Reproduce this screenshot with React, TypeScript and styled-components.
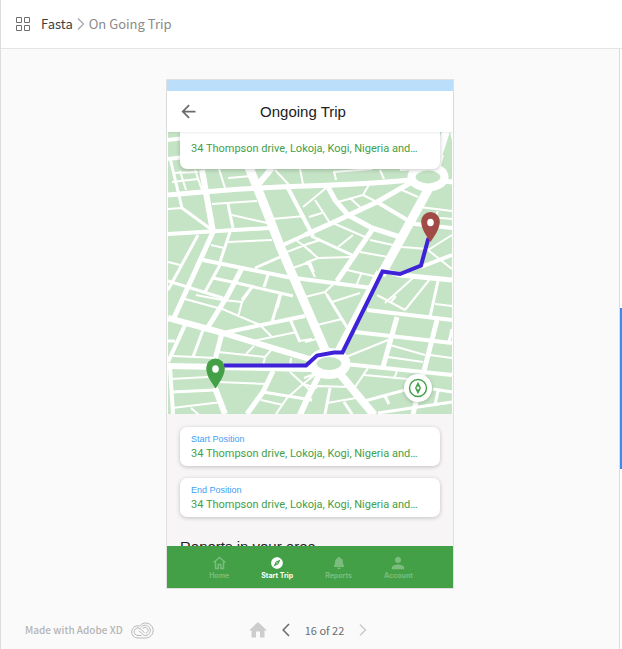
import React from "react";
import styled, { createGlobalStyle } from "styled-components";
import { MdArrowBack, MdExplore, MdPerson } from "react-icons/md";
import { IoNotifications } from "react-icons/io5";

const GlobalStyle = createGlobalStyle`
  *, *::before, *::after { box-sizing: border-box; }
  body { margin: 0; background: #fafafa; }
  button { margin: 0; padding: 0; border: 0; background: none; font: inherit; color: inherit; cursor: pointer; }
  a { color: inherit; text-decoration: none; }
  svg { display: block; flex: none; }
`;

const Page = styled.div`
  min-height: 100vh;
  display: flex;
  flex-direction: column;
  border-left: 1px solid #dcdcdc;
  font-family: "Noto Sans CJK SC", "Noto Sans", sans-serif;
  font-size: 13px;
  line-height: 20px;
`;

const TopBar = styled.header`
  display: flex;
  align-items: center;
  height: 49px;
  padding: 0 14px;
  background: #fff;
  border-bottom: 1px solid #e4e4e4;
`;

const Breadcrumb = styled.nav`
  display: flex;
  align-items: center;
  gap: 4px;
  margin-left: 10px;
`;

const Crumb = styled.a<{ $muted?: boolean }>`
  color: ${(p) => (p.$muted ? "#8a8a8a" : "#3c3c3c")};
`;

const Body = styled.div`
  flex: 1;
  display: flex;
`;

const Stage = styled.div`
  flex: 1;
  min-width: 0;
  display: flex;
  flex-direction: column;
  justify-content: space-between;
`;

const Rail = styled.aside`
  width: 3px;
  display: flex;
  flex-direction: column;
  border-left: 1px solid #dcdcdc;
  background: #fff;
`;

const RailSpace = styled.div<{ $grow: number }>`
  flex: ${(p) => p.$grow} 1 0;
`;

const RailMark = styled.div`
  flex: 161 1 0;
  background: #378ef0;
`;

const Canvas = styled.main`
  display: flex;
  justify-content: center;
  padding-top: 30px;
`;

const Phone = styled.section`
  width: 288px;
  max-width: 100%;
  aspect-ratio: 288 / 510;
  display: flex;
  flex-direction: column;
  border: 1px solid #e0e0e0;
  background: #f7f5f6;
  font-family: "Liberation Sans", Arial, sans-serif;
`;

const StatusBar = styled.div`
  height: 11px;
  background: #bbdefb;
`;

const AppBar = styled.header`
  position: relative;
  z-index: 1;
  display: grid;
  grid-template-columns: 20px 1fr 20px;
  align-items: center;
  height: 41px;
  padding: 0 11px;
  background: #fff;
  box-shadow: 0 1px 2px rgba(0, 0, 0, 0.08);
  color: #6b6b6b;
`;

const Title = styled.h1`
  margin: 0;
  padding-right: 14px;
  text-align: center;
  font-size: 15px;
  font-weight: 400;
  line-height: 20px;
  color: #212121;
`;

const Scroll = styled.div`
  flex: 1;
  min-height: 0;
  overflow: hidden;
`;

const MapArea = styled.div`
  position: relative;
  background: #fff;
`;

const MapDrawing = styled.svg`
  width: 100%;
  height: auto;
`;

const Card = styled.article<{ $floating?: boolean }>`
  background: #fff;
  border-radius: 7px;
  padding: 6px 11px 4px;
  box-shadow: 0 1px 4px rgba(0, 0, 0, 0.22);
  ${(p) =>
    p.$floating &&
    `
    position: absolute;
    top: 0;
    left: 13px;
    right: 13px;
    padding: 9px 11px 12px;
    border-radius: 0 0 7px 7px;
  `}
`;

const CardLabel = styled.div`
  font-size: 9px;
  line-height: 13px;
  color: #42a0f5;
`;

const Address = styled.div`
  overflow: hidden;
  white-space: nowrap;
  text-overflow: ellipsis;
  font-family: Roboto, sans-serif;
  font-size: 11px;
  line-height: 16px;
  color: #43a047;
`;

const Locate = styled.button`
  position: absolute;
  right: 21px;
  bottom: 12px;
  display: grid;
  place-items: center;
  width: 28px;
  height: 28px;
  border-radius: 50%;
  background: #fff;
  box-shadow: 0 1px 4px rgba(0, 0, 0, 0.2);
`;

const Positions = styled.div`
  display: flex;
  flex-direction: column;
  gap: 12px;
  padding: 13px 13px 20px;
`;

const SectionTitle = styled.h2`
  margin: 0;
  padding: 0 13px;
  font-size: 15px;
  font-weight: 400;
  line-height: 20px;
  color: #212121;
`;

const TabBar = styled.nav`
  position: relative;
  display: flex;
  justify-content: center;
  gap: 32px;
  height: 42px;
  padding: 10px 0 0 2px;
  background: #43a047;
`;

const Tab = styled.button<{ $active?: boolean }>`
  display: flex;
  flex-direction: column;
  align-items: center;
  align-self: flex-start;
  gap: 1px;
  color: ${(p) => (p.$active ? "#fff" : "#7abd7d")};
  font-family: Inter, sans-serif;
  font-size: 7px;
  font-weight: 700;
  line-height: 10px;
`;

const Footer = styled.footer`
  display: grid;
  grid-template-columns: 1fr auto 1fr;
  align-items: center;
  height: 38px;
  padding-right: 4px;
`;

const MadeWith = styled.a`
  display: flex;
  align-items: center;
  gap: 8px;
  padding-left: 24px;
  font-size: 10px;
  font-weight: 500;
  color: #b5b5b5;
`;

const Pager = styled.div`
  display: flex;
  align-items: center;
  gap: 15px;
  font-size: 11px;
  color: #6e6e6e;
`;

const ROADS: Record<number, string[]> = {
  2: [
    "M168 209L182 208", "M212 204L257 201", "M232 215L267 223", "M228 242L272 240", "M168 262L180 265",
    "M211 245L224 248", "M287 252L310 243", "M296 240L312 252", "M293 268L310 262L314 272", "M272 219L305 216",
    "M303 207L326 188", "M315 200L330 223", "M309 217L322 213", "M363 195L338 202", "M350 198L361 208",
    "M370 183L363 195L377 202", "M402 190L418 197", "M420 207L452 211", "M438 209L436 219", "M432 217L452 219",
    "M370 240L402 247", "M360 252L388 257", "M333 223L365 237", "M338 247L353 235", "M305 245L320 240",
    "M305 247L318 258L352 257", "M305 263L318 258", "M308 263L315 277", "M347 270L378 277", "M361 274L357 284",
    "M338 280L325 292L305 297", "M325 292L332 303", "M402 247L428 249", "M428 250L452 269", "M428 250L452 235",
    "M413 278L385 303", "M430 279L405 310", "M377 295L405 310", "M396 296L390 303", "M435 304L452 306",
    "M332 302L360 293", "M317 325L342 319", "M305 342L320 338", "M346 357L388 340", "M390 345L425 355",
    "M388 357L423 362", "M430 355L452 358", "M368 368L355 387", "M364 375L408 379", "M397 371L394 379",
    "M315 386L352 387", "M327 403L362 397", "M304 378L317 373", "M303 384L317 388", "M185 299L218 308",
    "M196 295L222 300", "M220 308L260 325L272 337", "M223 300L242 302L238 317", "M242 302L249 292",
    "M248 342L297 332", "M299 341L312 339", "M173 356L217 358", "M218 352L265 357", "M254 346L246 354",
    "M272 349L265 357L263 366", "M291 358L290 367", "M170 379L208 377", "M218 382L265 384", "M172 408L222 402",
    "M191 408L199 415", "M261 400L283 405", "M290 372L312 392", "M276 414L287 398L302 385L318 372",
    "M334 171L336 180", "M333 172L372 169", "M380 170L384 179", "M173 173L198 172", "M172 182L198 179",
    "M195 170L202 190", "M219 169L225 188", "M275 170L290 186", "M300 169L303 184", "M420 169L400 170",
    "M180 171L186 190", "M228 178L252 176", "M443 155L440 166",
  ],
  3: [
    "M170 158L182 208L212 230", "M228 204L233 228", "M198 235L168 290", "M168 281L223 298", "M230 232L220 262",
    "M220 265L205 292", "M213 278L237 283L293 296", "M252 287L242 300", "M268 275L264 287", "M281 293L277 308",
    "M255 268L280 257", "M311 236L352 255", "M438 281L430 317", "M327 295L348 329", "M280 295L272 322",
    "M290 319L300 342", "M203 330L193 357", "M168 341L175 341", "M172 392L215 390", "M263 392L312 400",
    "M330 388L325 414", "M344 402L352 414", "M361 402L405 390", "M433 389L452 392", "M378 413L452 402",
    "M385 396L389 404", "M438 391L435 405", "M452 329L449 342",
  ],
  4: [
    "M168 140L184 138", "M168 159L184 157", "M168 234L270 228", "M203 260L287 277L372 288", "M283 245L305 235",
    "M288 188L313 236", "M377 202L409 221", "M406 223L452 228", "M452 255L421 267", "M223 333L305 316",
    "M185 325L168 362", "M170 367L173 414", "M367 310L452 320", "M355 332L452 343", "M345 364L452 375",
    "M452 132L457 152",
  ],
  5: [
    "M168 195Q240 188 305 186T410 180", "M327 185L335 200L348 215L372 228L400 237", "M305 235L332 223L377 202L412 182",
    "M213 232L183 298L173 320", "M242 268L228 295L208 327", "M372 230L337 281", "M383 270L400 275L452 280",
    "M444 181L453 182", "M437 320L413 414", "M397 317L383 367", "M222 333L215 360", "M273 371L263 392L247 414",
  ],
  6: [
    "M202 170L213 232", "M168 318L223 333L316 361", "M168 366L312 369", "M215 388L225 414", "M320 373L308 397L300 415",
    "M272 168L257 186",
  ],
  8: ["M340 374L374 415", "M446 131L434 168", "M380 272L338 352"],
  9: ["M246 160L267 212L280 246L302 297L326 352", "M429 188L381 275"],
};

const CityMap = () => (
  <MapDrawing viewBox="167 132 286 282" role="img" aria-label="Route map">
    <rect x="168" y="132" width="284" height="282" fill="#c5e4c5" />
    {Object.entries(ROADS).map(([width, lines]) => (
      <path key={width} d={lines.join("")} fill="none" stroke="#fff" strokeWidth={width} strokeLinejoin="round" />
    ))}
    <ellipse cx="428" cy="177" rx="16.5" ry="10.5" fill="#c5e4c5" stroke="#fff" strokeWidth="8" />
    <ellipse cx="329" cy="363.5" rx="17" ry="11" fill="#c5e4c5" stroke="#fff" strokeWidth="9" />
    <path
      d="M224 365.5H306L317 355.5L334 352.5H342.5L382.5 271.5L400 274L421 265.5L428.5 238"
      fill="none"
      stroke="#3d22d8"
      strokeWidth="4"
    />
    <Pin x={215.5} y={388.5} color="#43a047" />
    <Pin x={430.5} y={242} color="#a14a46" />
  </MapDrawing>
);

const Pin = ({ x, y, color }: { x: number; y: number; color: string }) => (
  <g transform={`translate(${x} ${y})`}>
    <path d="M0 0C-5.5 -8 -9.3 -14 -9.3 -20.5A9.3 9.5 0 0 1 9.3 -20.5C9.3 -14 5.5 -8 0 0Z" fill={color} />
    <ellipse cy="-19.5" rx="3.3" ry="3.8" fill="#fff" />
  </g>
);

const LocateIcon = () => (
  <svg width="20" height="20" viewBox="0 0 20 20" aria-hidden="true">
    <circle cx="10" cy="10" r="8.5" fill="none" stroke="#43a047" strokeWidth="1.4" />
    <path d="M10 3.8L13 10L10 16.2L7 10Z" fill="#43a047" />
    <circle cx="10" cy="10" r="1.4" fill="#fff" />
  </svg>
);

const GridIcon = () => (
  <svg width="16" height="16" viewBox="0 0 16 16" fill="none" stroke="#6e6e6e" aria-hidden="true">
    <path d="M1.5 1.5h5v5h-5zM9.5 1.5h5v5h-5zM1.5 9.5h5v5h-5zM9.5 9.5h5v5h-5z" />
  </svg>
);

const Chevron = ({ left, color, thick }: { left?: boolean; color: string; thick?: boolean }) => (
  <svg width="8" height="14" viewBox="0 0 8 14" fill="none" stroke={color} strokeWidth={thick ? 1.6 : 1.3} aria-hidden="true">
    <path d={left ? "M7 1L1.2 7L7 13" : "M1 1.5L6.5 7L1 12.5"} />
  </svg>
);

const HouseIcon = () => (
  <svg width="18" height="16" viewBox="0 0 18 16" fill="#cdcdcd" aria-hidden="true">
    <path d="M9 0L18 8.500H15.500V15.500H11V9.500H7V15.500H2.500V8.500H0Z" />
  </svg>
);

const TabHomeIcon = () => (
  <svg width="13" height="14" viewBox="0 0 13 14" fill="none" stroke="currentColor" strokeWidth="1.5" aria-hidden="true">
    <path d="M0.6 6.5L6.5 1.5L12.4 6.5M2.5 5.5V12.5H5.2V8.5H7.8V12.5H10.5V5.5" />
  </svg>
);

const CloudIcon = () => (
  <svg width="23" height="17" viewBox="0 0 23 17" fill="none" stroke="#b8b8b8" aria-hidden="true">
    <path d="M7 16H15A7.5 7.5 0 1 0 8.6 4.1A6.1 6.1 0 1 0 7 16Z" />
    <path d="M10.5 13.5H7A3.8 3.8 0 1 1 9.6 7L13.6 10.8" />
    <path d="M9.8 5.6A5.2 5.2 0 1 1 14.8 13.6C13.4 13.6 12.4 13 11.4 12L7.8 8.7" />
    <path d="M11.9 6.6A2.9 2.9 0 1 1 14.8 11.2" />
  </svg>
);

const ADDRESS = "34 Thompson drive, Lokoja, Kogi, Nigeria and…";

export default function App() {
  return (
    <>
      <GlobalStyle />
      <Page>
        <TopBar>
          <button aria-label="All screens">
            <GridIcon />
          </button>
          <Breadcrumb aria-label="Breadcrumb">
            <Crumb href="#project">Fasta</Crumb>
            <Chevron color="#a8a8a8" />
            <Crumb href="#screen" $muted>
              On Going Trip
            </Crumb>
          </Breadcrumb>
        </TopBar>
        <Body>
          <Stage>
            <Canvas>
              <Phone>
                <StatusBar />
                <AppBar>
                  <button aria-label="Back">
                    <MdArrowBack size={21} />
                  </button>
                  <Title>Ongoing Trip</Title>
                </AppBar>
                <Scroll>
                  <MapArea>
                    <CityMap />
                    <Card $floating>
                      <Address>{ADDRESS}</Address>
                    </Card>
                    <Locate aria-label="Recenter map">
                      <LocateIcon />
                    </Locate>
                  </MapArea>
                  <Positions>
                    <Card>
                      <CardLabel>Start Position</CardLabel>
                      <Address>{ADDRESS}</Address>
                    </Card>
                    <Card>
                      <CardLabel>End Position</CardLabel>
                      <Address>{ADDRESS}</Address>
                    </Card>
                  </Positions>
                  <SectionTitle>Reports in your area</SectionTitle>
                </Scroll>
                <TabBar aria-label="Main">
                  <Tab>
                    <TabHomeIcon />
                    Home
                  </Tab>
                  <Tab $active>
                    <MdExplore size={14} />
                    Start Trip
                  </Tab>
                  <Tab>
                    <IoNotifications size={14} />
                    Reports
                  </Tab>
                  <Tab>
                    <MdPerson size={14} viewBox="3 3 18 18" />
                    Account
                  </Tab>
                </TabBar>
              </Phone>
            </Canvas>
            <Footer>
              <MadeWith href="#xd">
                Made with Adobe XD
                <CloudIcon />
              </MadeWith>
              <Pager>
                <button aria-label="Home screen">
                  <HouseIcon />
                </button>
                <button aria-label="Previous screen">
                  <Chevron left thick color="#6e6e6e" />
                </button>
                <span>16 of 22</span>
                <button aria-label="Next screen">
                  <Chevron color="#cdcdcd" thick />
                </button>
              </Pager>
            </Footer>
          </Stage>
          <Rail>
            <RailSpace $grow={259} />
            <RailMark />
            <RailSpace $grow={180} />
          </Rail>
        </Body>
      </Page>
    </>
  );
}
